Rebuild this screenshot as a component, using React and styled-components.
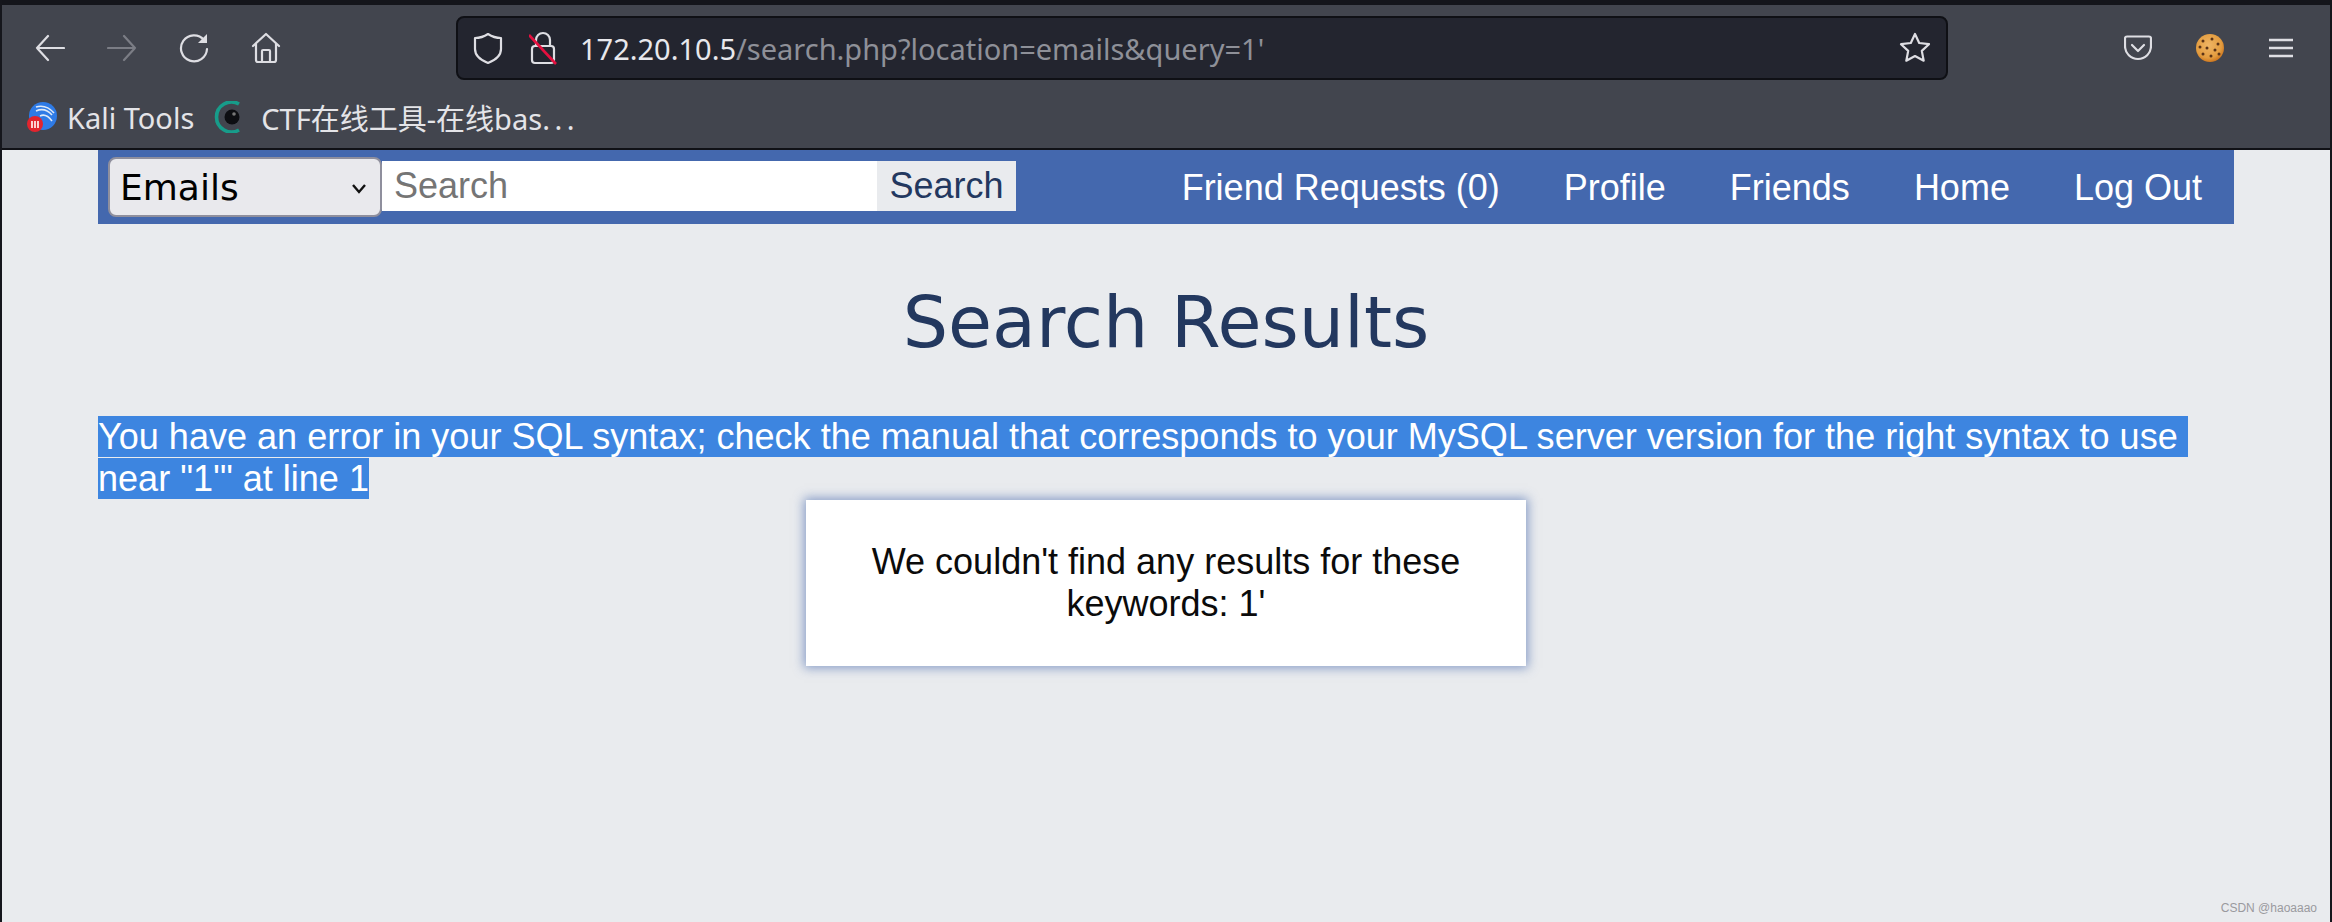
import React from "react";
import styled, { createGlobalStyle } from "styled-components";

const Global = createGlobalStyle`
  html, body { margin: 0; padding: 0; height: 100%; overflow: hidden; background: #e9ebee; }
  * { box-sizing: border-box; }
`;

const Window = styled.div`
  position: relative;
  width: 2332px;
  height: 922px;
  display: flex;
  flex-direction: column;
  border-left: 2px solid #15161c;
  border-right: 2px solid #15161c;
  background: #e9ebee;
  overflow: hidden;
`;
const TopStrip = styled.div`
  height: 5px;
  flex: none;
  background: #14151b;
`;
const Chrome = styled.header`
  flex: none;
  height: 145px;
  background: #42454e;
  border-bottom: 2px solid #101116;
  display: flex;
  flex-direction: column;
`;
const NavRow = styled.div`
  height: 85px;
  display: flex;
  align-items: center;
  padding-left: 33px;
`;
const IconSlot = styled.button`
  width: 30px;
  height: 32px;
  padding: 0;
  margin: 0 42px 0 0;
  border: 0;
  background: none;
  color: ${p => (p.$off ? "#7b7d85" : "#dedee3")};
  display: flex;
  align-items: center;
  justify-content: center;
  &:nth-child(4) { margin-right: 175px; }
`;
const UrlBar = styled.div`
  width: 1492px;
  height: 64px;
  margin-top: 1px;
  flex: none;
  background: #23252f;
  border: 2px solid #0f1015;
  border-radius: 8px;
  display: flex;
  align-items: center;
  padding: 0 15px;
  color: #dedee3;
`;
const UrlText = styled.div`
  flex: 1;
  margin-left: 23px;
  font: 400 29px "Noto Sans", sans-serif;
  color: #8e9098;
  white-space: nowrap;
  & b { font-weight: 400; color: #e8e8ec; }
`;
const ToolIcons = styled.div`
  display: flex;
  align-items: center;
  margin-left: 176px;
  gap: 43px;
  color: #dedee3;
`;
const BookmarkRow = styled.div`
  flex: 1;
  display: flex;
  align-items: center;
  padding: 0 0 4px 25px;
`;
const Bookmark = styled.div`
  display: flex;
  align-items: center;
  gap: ${p => p.$gap}px;
  margin-right: 20px;
  font: 400 29px "Noto Sans", "Noto Sans CJK SC", sans-serif;
  color: #e4e4e8;
  white-space: nowrap;
`;
const Dots = styled.span`
  letter-spacing: 4.5px;
`;
const Page = styled.main`
  flex: 1;
  padding: 0 96px;
  position: relative;
`;
const TopNav = styled.nav`
  height: 74px;
  background: #4468ae;
  display: flex;
  align-items: center;
  padding: 0 32px 0 10px;
`;
const SelectWrap = styled.div`
  position: relative;
  width: 274px;
  height: 60px;
  flex: none;
  margin-top: -1px;
`;
const Select = styled.select`
  appearance: none;
  width: 100%;
  height: 100%;
  border: 2px solid #8f8f9d;
  border-radius: 8px;
  background: #e9e9ed;
  color: #000;
  padding: 2px 0 0 10px;
  font: 400 36px "DejaVu Sans", sans-serif;
`;
const Chevron = styled.svg`
  position: absolute;
  right: 15px;
  top: 26px;
`;
const SearchInput = styled.input`
  width: 495px;
  height: 50px;
  margin-top: -2px;
  border: 0;
  outline: 0;
  background: #fff;
  padding: 0 12px;
  font: 400 36px "Liberation Sans", sans-serif;
  &::placeholder { color: #757575; opacity: 1; }
`;
const SearchButton = styled.button`
  width: 139px;
  height: 50px;
  margin-top: -2px;
  border: 0;
  padding: 0;
  background: #e9ebee;
  color: #23385f;
  font: 400 36px "Liberation Sans", sans-serif;
`;
const Links = styled.div`
  margin-left: auto;
  display: flex;
  gap: 64px;
  padding-top: 2px;
`;
const NavLink = styled.a`
  color: #fff;
  font: 400 36px "Liberation Sans", sans-serif;
  white-space: nowrap;
`;
const Title = styled.h1`
  margin: 57px 0 51px;
  height: 84px;
  text-align: center;
  font: 400 71.5px/84px "DejaVu Sans", sans-serif;
  color: #23385f;
`;
const ErrorText = styled.div`
  font: 400 36.05px/42px "Liberation Sans", sans-serif;
  color: #fff;
  white-space: pre-wrap;
  & span { background: #3d85e0; }
`;
const Card = styled.section`
  width: 720px;
  height: 166px;
  margin: 0 auto;
  background: #fff;
  box-shadow: 0 0 10px 2px rgba(68, 104, 174, 0.6);
  padding: 41px 40px;
  text-align: center;
  font: 400 36px/42px "Liberation Sans", sans-serif;
  color: #0b0b0b;
`;
const Watermark = styled.div`
  position: absolute;
  right: 13px;
  bottom: 7px;
  font: 400 12px "Liberation Sans", sans-serif;
  color: #9a9a9e;
`;

const s = { fill: "none", stroke: "currentColor", strokeWidth: 2.2, strokeLinecap: "round", strokeLinejoin: "round" };

export default function App() {
  return (
    <Window>
      <Global />
      <TopStrip />
      <Chrome>
        <NavRow>
          <IconSlot aria-label="Back">
            <svg width="30" height="28" viewBox="0 0 30 28" {...s}><path d="M29 14H2M13 2 2 14l11 12" /></svg>
          </IconSlot>
          <IconSlot $off aria-label="Forward">
            <svg width="30" height="28" viewBox="0 0 30 28" {...s}><path d="M1 14h27M17 2l11 12-11 12" /></svg>
          </IconSlot>
          <IconSlot aria-label="Reload">
            <svg width="30" height="30" viewBox="0 0 30 30" {...s}>
              <path d="M25 7A13 13 0 1 0 28 16" />
              <path d="M19 10h9V1z" fill="currentColor" stroke="none" />
            </svg>
          </IconSlot>
          <IconSlot aria-label="Home">
            <svg width="30" height="32" viewBox="0 0 30 32" {...s}>
              <path d="M2 14 15 2l13 12M5 12v16q0 2 2 2h16q2 0 2-2V12" />
              <path d="M11 30V19q0-1 1-1h6q1 0 1 1v11" />
            </svg>
          </IconSlot>
          <UrlBar>
            <svg width="30" height="32" viewBox="0 0 30 32" {...s}>
              <path d="M15 2q6 4 13 4v11q0 9-13 14Q2 26 2 17V6q7 0 13-4z" />
            </svg>
            <svg width="28" height="34" viewBox="0 0 28 34" style={{ marginLeft: 26 }}>
              <g {...s}>
                <path d="M7 14V9a7 7 0 0 1 14 0v5" />
                <rect x="3" y="15" width="22" height="17" rx="3" />
              </g>
              <path d="M0 4 27 33" stroke="#e5103f" strokeWidth="2.6" />
            </svg>
            <UrlText><b>172.20.10.5</b>/search.php?location=emails&amp;query=1'</UrlText>
            <svg width="32" height="32" viewBox="0 0 32 32" {...s}>
              <path d="m16 2 4.2 9 9.8 1.2-7.2 6.7 1.9 9.8L16 24l-8.700 4.700 1.900-9.800L2 12.200 11.800 11z" />
            </svg>
          </UrlBar>
          <ToolIcons>
            <svg width="28" height="26" viewBox="0 0 28 26" {...s}>
              <path d="M3 1.500h22q2 0 2 2V11a13 13 0 0 1-26 0V3.500q0-2 2-2z" />
              <path d="m8 10 6 6 6-6" />
            </svg>
            <svg width="30" height="30" viewBox="0 0 30 30">
              <defs>
                <radialGradient id="ck" cx="0.45" cy="0.4" r="0.65">
                  <stop offset="0" stopColor="#efb565" />
                  <stop offset="0.7" stopColor="#e39c3f" />
                  <stop offset="1" stopColor="#c66c17" />
                </radialGradient>
              </defs>
              <circle cx="15" cy="15" r="14" fill="url(#ck)" />
              {[[8, 8], [17, 6], [23, 11], [12, 15], [20, 17], [8, 21], [16, 23], [24, 21], [5, 14]].map(([x, y]) => (
                <circle key={x + "-" + y} cx={x} cy={y} r="1.500" fill="#5b3317" />
              ))}
            </svg>
            <svg width="26" height="22" viewBox="0 0 26 22" fill="none" stroke="currentColor" strokeWidth="2.400">
              <path d="M1 3h24M1 11h24M1 19h24" />
            </svg>
          </ToolIcons>
        </NavRow>
        <BookmarkRow>
          <Bookmark $gap={10}>
            <svg width="30" height="32" viewBox="0 0 30 32">
              <circle cx="16" cy="15" r="14" fill="#2f7be6" />
              <path d="M9 10q9-4 16 4M13 15q6-3 12 5M9 6q10-3 18 6" fill="none" stroke="#dfeaf8" strokeWidth="1.600" />
              <circle cx="8" cy="23" r="8" fill="#e2242e" />
              <path d="M5 20v7M8 20v7M11 20v7" stroke="#ffe3e3" strokeWidth="1.800" />
            </svg>
            Kali Tools
          </Bookmark>
          <Bookmark $gap={19}>
            <svg width="28" height="32" viewBox="0 0 28 32">
              <path d="M25 3A15 15 0 1 0 25 29" fill="none" stroke="#179c8a" strokeWidth="3.600" />
              <circle cx="18" cy="16" r="7.500" fill="#0d0e12" />
              <circle cx="20" cy="13" r="1.800" fill="#777" />
            </svg>
            <span>CTF在线工具-在线bas<Dots>...</Dots></span>
          </Bookmark>
        </BookmarkRow>
      </Chrome>
      <Page>
        <TopNav>
          <SelectWrap>
            <Select defaultValue="Emails"><option>Emails</option></Select>
            <Chevron width="16" height="12" viewBox="0 0 16 12" fill="none" stroke="#111" strokeWidth="2.400"><path d="m2 2 6 7 6-7" /></Chevron>
          </SelectWrap>
          <SearchInput placeholder="Search" />
          <SearchButton>Search</SearchButton>
          <Links>
            <NavLink>Friend Requests (0)</NavLink>
            <NavLink>Profile</NavLink>
            <NavLink>Friends</NavLink>
            <NavLink>Home</NavLink>
            <NavLink>Log Out</NavLink>
          </Links>
        </TopNav>
        <Title>Search Results</Title>
        <ErrorText><span>You have an error in your SQL syntax; check the manual that corresponds to your MySQL server version for the right syntax to use near "1'" at line 1</span></ErrorText>
        <Card>We couldn't find any results for these keywords: 1'</Card>
        <Watermark>CSDN @haoaaao</Watermark>
      </Page>
    </Window>
  );
}
